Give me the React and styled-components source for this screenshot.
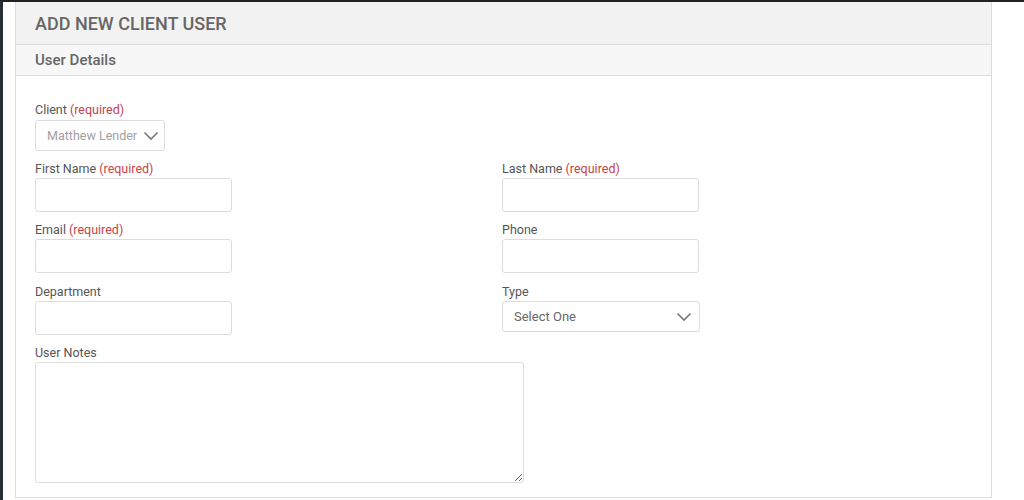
import React from "react";
import styled, { createGlobalStyle } from "styled-components";

const Global = createGlobalStyle`
  html, body { margin: 0; padding: 0; background: #fff; }
  body { font-family: Roboto, "Liberation Sans", Arial, sans-serif; }
  * { box-sizing: border-box; }
`;

const Page = styled.div`
  min-height: 500px;
  border-top: 2px solid #222;
  border-left: 3px solid #283037;
  padding-left: 12px;
  padding-right: 32px;
  display: flex;
`;

const Panel = styled.section`
  width: 977px;
  border: 1px solid #dcdcdc;
  border-top: none;
  background: #fff;
  height: 496px;
`;

const Header = styled.div`
  height: 43px;
  background: #f2f2f2;
  border-bottom: 1px solid #dcdcdc;
  display: flex;
  align-items: center;
  padding-left: 19px;
`;

const Title = styled.h1`
  margin: 0;
  font-size: 18px;
  font-weight: 500;
  color: #666;
`;

const SubHeader = styled.div`
  height: 31px;
  background: #f7f7f7;
  border-bottom: 1px solid #dcdcdc;
  display: flex;
  align-items: center;
  padding-left: 19px;
`;

const SubTitle = styled.h2`
  margin: 0;
  font-size: 15px;
  font-weight: 500;
  color: #666;
`;

const Body = styled.div`
  padding: 25px 19px 0 19px;
`;

const Grid = styled.div`
  display: grid;
  grid-template-columns: 467px 467px;
  row-gap: 9px;
`;

const Field = styled.div`
  display: flex;
  flex-direction: column;
  grid-column: ${(p) => (p.$full ? "1 / -1" : "auto")};
  margin-top: ${(p) => (p.$nudge ? "1px" : "0")};
`;

const Label = styled.label`
  font-size: 12.5px;
  line-height: 16px;
  padding-top: 1px;
  margin-bottom: 1px;
  font-weight: 400;
  color: #555;
`;

const Req = styled.span`
  color: #c9424a;
`;

const Input = styled.input`
  width: 197px;
  height: 34px;
  border: 1px solid #dcdcdc;
  border-radius: 3px;
  background: #fff;
  font-family: inherit;
  font-size: 13px;
  padding: 0 10px;
  outline: none;
`;

const SelectBox = styled.div`
  width: ${(p) => p.$w}px;
  height: ${(p) => p.$h}px;
  margin-top: ${(p) => (p.$muted ? "1px" : "0")};
  border: 1px solid #dcdcdc;
  border-radius: 3px;
  background: #fff;
  display: flex;
  align-items: center;
  justify-content: space-between;
  padding: 0 7px 0 11px;
  font-size: ${(p) => (p.$muted ? "12.5px" : "13px")};
  color: ${(p) => (p.$muted ? "#a0a0a0" : "#666")};
  white-space: nowrap;
  overflow: hidden;
`;

const Chevron = styled.svg`
  flex: none;
  margin-left: 6px;
`;

const TextArea = styled.textarea`
  width: 489px;
  height: 121px;
  border: 1px solid #dcdcdc;
  border-radius: 3px;
  font-family: inherit;
  font-size: 13px;
  outline: none;
  padding: 6px 10px;
`;

const Arrow = () => (
  <Chevron width="16" height="10" viewBox="0 0 16 10">
    <path d="M1.5 1.5 L8 8 L14.5 1.5" fill="none" stroke="#777" strokeWidth="1.6" />
  </Chevron>
);

export default function App() {
  return (
    <>
      <Global />
      <Page>
        <Panel>
          <Header>
            <Title>ADD NEW CLIENT USER</Title>
          </Header>
          <SubHeader>
            <SubTitle>User Details</SubTitle>
          </SubHeader>
          <Body>
            <Grid>
              <Field $full>
                <Label>
                  Client <Req>(required)</Req>
                </Label>
                <SelectBox $w={130} $h={31} $muted>
                  Matthew Lender
                  <Arrow />
                </SelectBox>
              </Field>
              <Field>
                <Label>
                  First Name <Req>(required)</Req>
                </Label>
                <Input />
              </Field>
              <Field>
                <Label>
                  Last Name <Req>(required)</Req>
                </Label>
                <Input />
              </Field>
              <Field>
                <Label>
                  Email <Req>(required)</Req>
                </Label>
                <Input />
              </Field>
              <Field>
                <Label>Phone</Label>
                <Input />
              </Field>
              <Field $nudge>
                <Label>Department</Label>
                <Input />
              </Field>
              <Field $nudge>
                <Label>Type</Label>
                <SelectBox $w={198} $h={31}>
                  Select One
                  <Arrow />
                </SelectBox>
              </Field>
              <Field $full>
                <Label>User Notes</Label>
                <TextArea />
              </Field>
            </Grid>
          </Body>
        </Panel>
      </Page>
    </>
  );
}
